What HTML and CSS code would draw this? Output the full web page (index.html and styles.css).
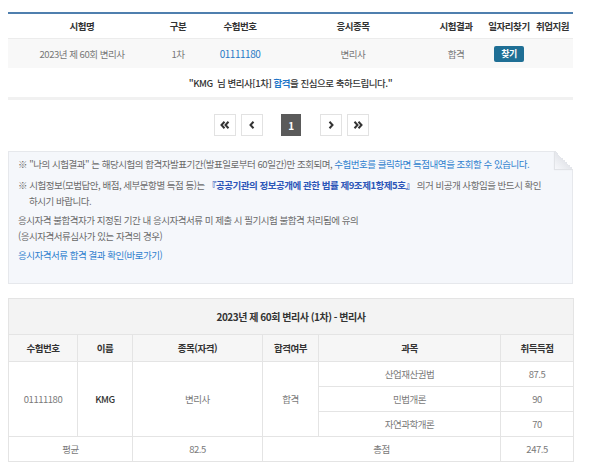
FILE: index.html
```html
<!DOCTYPE html>
<html lang="ko">
<head>
  <meta charset="UTF-8">
  <meta name="viewport" content="width=device-width, initial-scale=1.0">
  <title>나의 시험결과</title>
  <link rel="stylesheet" href="styles.css">
</head>
<body>
  <main class="wrap">
    <table class="result-table">
      <colgroup>
        <col style="width:148px"><col style="width:44px"><col style="width:80px"><col style="width:146px">
        <col style="width:60px"><col style="width:46px"><col style="width:41px">
      </colgroup>
      <thead>
        <tr>
          <th>시험명</th><th>구분</th><th>수험번호</th><th>응시종목</th>
          <th>시험결과</th><th>일자리찾기</th><th>취업지원</th>
        </tr>
      </thead>
      <tbody>
        <tr class="data-row">
          <td>2023년 제 60회 변리사</td>
          <td>1차</td>
          <td><a class="num-link" href="#">01111180</a></td>
          <td>변리사</td>
          <td>합격</td>
          <td><button class="find-btn" type="button">찾기</button></td>
          <td></td>
        </tr>
        <tr class="msg-row">
          <td colspan="7">"KMG&nbsp; 님 변리사[1차] <strong class="pass">합격</strong>을 진심으로 축하드립니다."</td>
        </tr>
      </tbody>
    </table>

    <nav class="pager">
      <a class="page-btn" href="#"><svg width="10" height="8" viewBox="0 0 10 8"><path d="M4.5 0.8 L1.5 4 L4.5 7.2 M8.5 0.8 L5.5 4 L8.5 7.2" fill="none" stroke="#333" stroke-width="2"/></svg></a>
      <a class="page-btn" href="#"><svg width="6" height="8" viewBox="0 0 6 8"><path d="M4.5 0.8 L1.5 4 L4.5 7.2" fill="none" stroke="#333" stroke-width="2"/></svg></a>
      <span class="page-btn current">1</span>
      <a class="page-btn" href="#"><svg width="6" height="8" viewBox="0 0 6 8"><path d="M1.5 0.8 L4.5 4 L1.5 7.2" fill="none" stroke="#333" stroke-width="2"/></svg></a>
      <a class="page-btn" href="#"><svg width="10" height="8" viewBox="0 0 10 8"><path d="M1.5 0.8 L4.5 4 L1.5 7.2 M5.5 0.8 L8.5 4 L5.5 7.2" fill="none" stroke="#333" stroke-width="2"/></svg></a>
    </nav>

    <section class="notice">
      <span class="fold"></span>
      <p>※ "나의 시험결과" 는 해당시험의 합격자발표기간(발표일로부터 60일간)만 조회되며, <span class="blue">수험번호를 클릭하면 득점내역을 조회할 수 있습니다.</span></p>
      <p class="hang">※ 시험정보(모범답안, 배점, 세부문항별 득점 등)는 <strong class="law">『공공기관의 정보공개에 관한 법률 제9조제1항제5호』</strong> 의거 비공개 사항임을 반드시 확인<br>하시기 바랍니다.</p>
      <p class="gap">응시자격 불합격자가 지정된 기간 내 응시자격서류 미 제출 시 필기시험 불합격 처리됨에 유의<br>(응시자격서류심사가 있는 자격의 경우)</p>
      <p class="gap"><a class="blue" href="#">응시자격서류 합격 결과 확인(바로가기)</a></p>
    </section>

    <table class="score-table">
      <colgroup>
        <col style="width:69px"><col style="width:55px"><col style="width:130px">
        <col style="width:56px"><col style="width:182px"><col style="width:73px">
      </colgroup>
      <thead>
        <tr class="title-row"><th colspan="6">2023년 제 60회 변리사 (1차) - 변리사</th></tr>
        <tr class="head-row">
          <th>수험번호</th><th>이름</th><th>종목(자격)</th><th>합격여부</th><th>과목</th><th>취득득점</th>
        </tr>
      </thead>
      <tbody>
        <tr>
          <td rowspan="3">01111180</td>
          <td rowspan="3" class="name">KMG</td>
          <td rowspan="3">변리사</td>
          <td rowspan="3">합격</td>
          <td>산업재산권법</td>
          <td>87.5</td>
        </tr>
        <tr><td>민법개론</td><td>90</td></tr>
        <tr><td>자연과학개론</td><td>70</td></tr>
        <tr>
          <td colspan="2">평균</td>
          <td>82.5</td>
          <td colspan="2">총점</td>
          <td>247.5</td>
        </tr>
      </tbody>
    </table>
  </main>
</body>
</html>
```

FILE: styles.css
```css
body {
  margin: 0;
  background-color: #fff;
  font-family: 'Noto Sans CJK KR', 'Noto Sans', sans-serif;
  font-size: 9.5px;
  letter-spacing: -0.05em;
  color: #777;
}

.wrap {
  width: 565px;
  margin-left: 8px;
  padding-top: 12px;
}

table {
  width: 565px;
  border-collapse: collapse;
  table-layout: fixed;
}

th, td {
  padding: 0;
  text-align: center;
}

/* top result table */
.result-table {
  border-top: 2px solid #4f7fae;
}

.result-table th {
  height: 24px;
  color: #333;
  font-weight: bold;
  border-bottom: 1px solid #ececec;
}

.data-row td {
  height: 29px;
  background-color: #f8f8f8;
}

.num-link {
  color: #2a7ac5;
  text-decoration: none;
  font-size: 10px;
}

.find-btn {
  width: 30px;
  height: 16px;
  padding: 0;
  border: 0;
  border-radius: 2px;
  background-color: #1f6f95;
  color: #fff;
  font-family: inherit;
  font-size: 9px;
  font-weight: bold;
  letter-spacing: -0.05em;
}

.msg-row td {
  height: 29px;
  color: #333;
  font-weight: 500;
  border-bottom: 3px solid #f1f1f1;
}

.pass {
  color: #1f76c8;
}

/* paging */
.pager {
  display: flex;
  justify-content: center;
  align-items: center;
  margin: 14px 0 0 0;
  padding-left: 1px;
}

.page-btn {
  display: flex;
  align-items: center;
  justify-content: center;
  width: 20px;
  height: 20px;
  margin: 0 2.5px;
  border: 1px solid #e2e2e2;
  background-color: #fff;
}

.page-btn.current {
  width: 20px;
  height: 22px;
  margin: 0 16px;
  border: 0;
  background-color: #5a5a5a;
  color: #fff;
  font-weight: bold;
  font-size: 10px;
}

/* notice box */
.notice {
  position: relative;
  box-sizing: border-box;
  height: 133px;
  margin-top: 15px;
  padding: 4px 9px 0 9px;
  background-color: #f5f7fb;
  border: 1px solid #e6e8ec;
  line-height: 16px;
  color: #6a6a6a;
}

.notice p {
  margin: 0;
}

.notice .hang {
  margin-top: 5px;
  padding-left: 11px;
  text-indent: -11px;
}

.notice .gap {
  margin-top: 3px;
}

.blue {
  color: #2f7fce;
  text-decoration: none;
}

.law {
  color: #2b55b8;
}

.fold {
  position: absolute;
  top: -1px;
  right: -1px;
  width: 18px;
  height: 18px;
  background: linear-gradient(225deg, #fff 50%, #e3e5ea 50%, #f7f8fb 100%);
  box-shadow: -1px 1px 1px rgba(0, 0, 0, 0.08);
}

/* score table */
.score-table {
  margin-top: 14px;
  border: 1px solid #e4e4e4;
}

.score-table th,
.score-table td {
  border: 1px solid #e4e4e4;
}

.title-row th {
  height: 35px;
  background-color: #f3f3f3;
  color: #333;
  font-size: 10px;
  font-weight: bold;
}

.head-row th {
  height: 26px;
  background-color: #f6f6f6;
  color: #333;
  font-weight: bold;
}

.score-table td {
  height: 24px;
  color: #7a7a7a;
}

.score-table .name {
  color: #333;
  font-weight: 500;
}
```
